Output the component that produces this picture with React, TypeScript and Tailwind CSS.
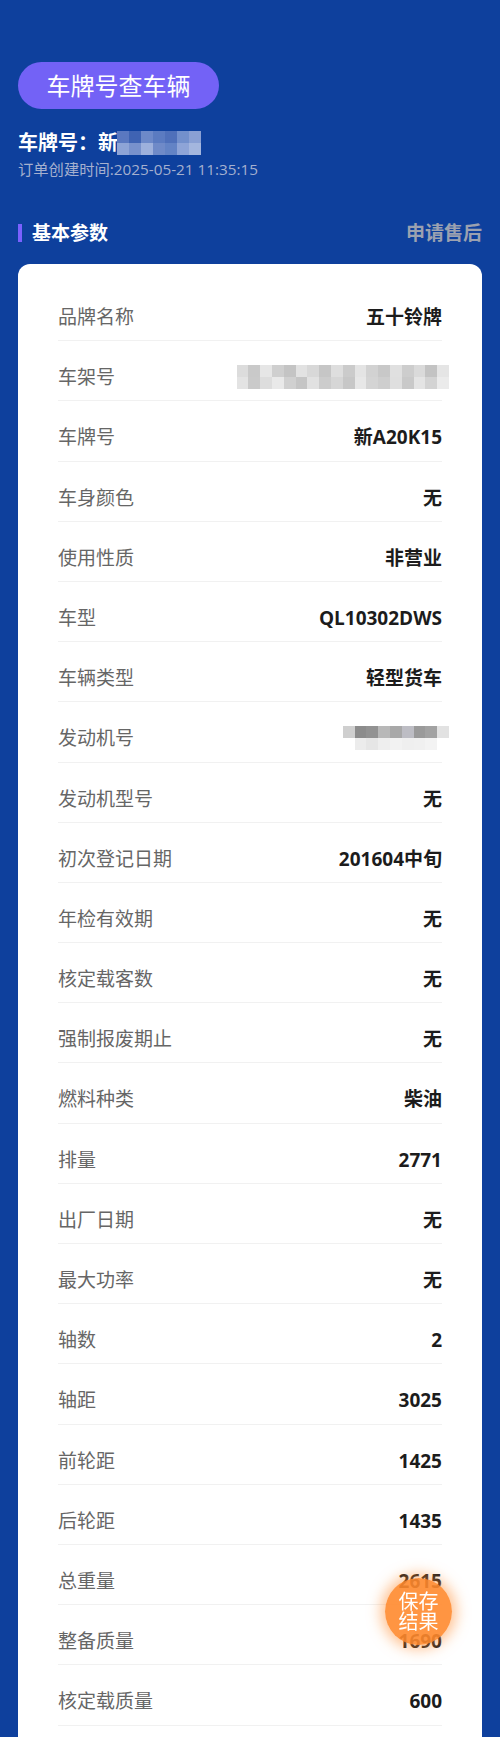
import React from "react";

const FONT = { fontFamily: '"Open Sans", "Noto Sans CJK SC", sans-serif' };

const rows: [string, string][] = [
  ["品牌名称", "五十铃牌"],
  ["车架号", "#VIN"],
  ["车牌号", "新A20K15"],
  ["车身颜色", "无"],
  ["使用性质", "非营业"],
  ["车型", "QL10302DWS"],
  ["车辆类型", "轻型货车"],
  ["发动机号", "#ENG"],
  ["发动机型号", "无"],
  ["初次登记日期", "201604中旬"],
  ["年检有效期", "无"],
  ["核定载客数", "无"],
  ["强制报废期止", "无"],
  ["燃料种类", "柴油"],
  ["排量", "2771"],
  ["出厂日期", "无"],
  ["最大功率", "无"],
  ["轴数", "2"],
  ["轴距", "3025"],
  ["前轮距", "1425"],
  ["后轮距", "1435"],
  ["总重量", "2615"],
  ["整备质量", "1690"],
  ["核定载质量", "600"],
];

const vinTop = ["bg-[#dcdcdc]", "bg-[#c9c9c9]", "bg-[#e6e6e6]", "bg-[#cfcfcf]", "bg-[#c4c4c4]", "bg-[#e2e2e2]", "bg-[#d8d8d8]", "bg-[#c6c6c6]", "bg-[#dedede]", "bg-[#cbcbcb]", "bg-[#e4e4e4]", "bg-[#d2d2d2]", "bg-[#c8c8c8]", "bg-[#e0e0e0]", "bg-[#cdcdcd]", "bg-[#dadada]", "bg-[#c3c3c3]", "bg-[#e5e5e5]"];
const vinBot = ["bg-[#e3e3e3]", "bg-[#cacaca]", "bg-[#dddddd]", "bg-[#e9e9e9]", "bg-[#d0d0d0]", "bg-[#c5c5c5]", "bg-[#e1e1e1]", "bg-[#cccccc]", "bg-[#d6d6d6]", "bg-[#c7c7c7]", "bg-[#e7e7e7]", "bg-[#d4d4d4]", "bg-[#cecece]", "bg-[#dfdfdf]", "bg-[#c9c9c9]", "bg-[#e4e4e4]", "bg-[#d3d3d3]", "bg-[#ebebeb]"];
const engTop = ["bg-[#cfcfcf]", "bg-[#8c8c8c]", "bg-[#929292]", "bg-[#b8b8b8]", "bg-[#a8a8a8]", "bg-[#bdbdc4]", "bg-[#9a9a9a]", "bg-[#a2a2a2]", "bg-[#e2e2e2]"];
const engBot = ["bg-[#ffffff]", "bg-[#ececec]", "bg-[#e6e6e6]", "bg-[#eeeeee]", "bg-[#f2f2f2]", "bg-[#efefef]", "bg-[#f0f0f0]", "bg-[#f3f3f3]", "bg-[#ffffff]"];
const plateTop = ["bg-[#5a78c0]", "bg-[#3f63b3]", "bg-[#6d89c9]", "bg-[#5b7bc1]", "bg-[#4f70ba]", "bg-[#7390cc]", "bg-[#8aa0d4]"];
const plateBot = ["bg-[#8ea4d6]", "bg-[#7891cc]", "bg-[#9db0dc]", "bg-[#6f8ac8]", "bg-[#6383c5]", "bg-[#8ea4d7]", "bg-[#a4b6de]"];

function Mosaic({ top, bot, cell, h }: { top: string[]; bot: string[]; cell: string; h: string }) {
  return (
    <div className="flex flex-col">
      <div className="flex">
        {top.map((c, i) => (
          <div key={i} className={`${cell} ${h} ${c}`} />
        ))}
      </div>
      <div className="flex">
        {bot.map((c, i) => (
          <div key={i} className={`${cell} ${h} ${c}`} />
        ))}
      </div>
    </div>
  );
}

export default function App() {
  return (
    <div className="min-h-screen bg-[#0e409d] px-[18px] pt-[62px]" style={FONT}>
      <div className="flex h-[47px] w-[201px] items-center justify-center rounded-[24px] bg-[#7362f6] text-[24px] leading-none text-white">
        车牌号查车辆
      </div>

      <div className="mt-[20px] flex h-[28px] items-center text-[20px] font-bold leading-[28px] text-white">
        <span>车牌号：新</span>
        <div className="-ml-[1px]">
          <Mosaic top={plateTop} bot={plateBot} cell="w-[12px]" h="h-[12px]" />
        </div>
      </div>
      <div className="mt-[2px] text-[15.3px] leading-[20px] text-[#a5b0cf]">订单创建时间:2025-05-21 11:35:15</div>

      <div className="mt-[41px] flex h-[26px] items-center justify-between">
        <div className="flex items-center gap-[10px]">
          <div className="h-[18px] w-[4px] bg-[#7b61ff]" />
          <span className="text-[19px] font-bold leading-[26px] text-white">基本参数</span>
        </div>
        <span className="text-[19px] font-bold leading-[26px] text-[#9ba1b0]">申请售后</span>
      </div>

      <div className="mt-[18px] rounded-t-[12px] bg-white px-[40px] pt-[17px] pb-[60px]">
        {rows.map(([k, v]) => (
          <div
            key={k}
            className="flex items-center justify-between border-b border-[#f1f1f1] pt-[23px] pb-[10.2px] leading-[26px]"
          >
            <span className="text-[19px] text-[#666666]">{k}</span>
            {v === "#VIN" ? (
              <div className="-mr-[7px] flex h-[26px] items-center">
                <Mosaic top={vinTop} bot={vinBot} cell="w-[11.8px]" h="h-[12px]" />
              </div>
            ) : v === "#ENG" ? (
              <div className="-mr-[7px] flex h-[26px] items-center">
                <Mosaic top={engTop} bot={engBot} cell="w-[11.8px]" h="h-[12px]" />
              </div>
            ) : (
              <span className="text-[19px] font-bold text-[#1c1c1c]">{v}</span>
            )}
          </div>
        ))}
      </div>

      <div className="fixed bottom-[92px] right-[48px] flex h-[67px] w-[67px] flex-col items-center justify-center rounded-full bg-[#ff8a2e]/90 text-[20px] leading-[20px] text-white shadow-[0_0_14px_4px_rgba(255,140,50,0.55)]">
        <span>保存</span>
        <span>结果</span>
      </div>
    </div>
  );
}
